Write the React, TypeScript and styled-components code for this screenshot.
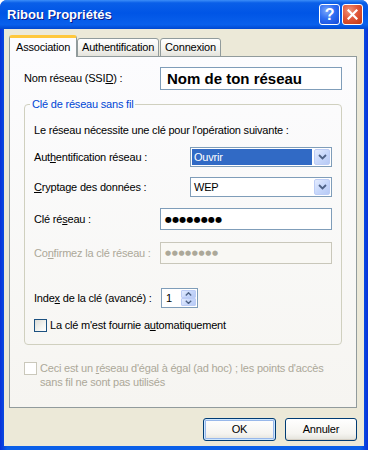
import React from 'react';
import styled, { createGlobalStyle } from 'styled-components';

const GlobalStyle = createGlobalStyle`
  html, body {
    margin: 0;
    padding: 0;
    background: #ffffff;
  }
  body {
    font-family: "Liberation Sans", Arial, sans-serif;
    font-size: 11px;
    line-height: 13px;
    letter-spacing: -0.2px;
  }
`;

const Window = styled.div`
  width: 368px;
  height: 450px;
  box-sizing: border-box;
  display: flex;
  flex-direction: column;
  background: linear-gradient(to right, #0831d9 0%, #0a5fe8 2%, #0a5fe8 98%, #0831d9 100%);
  border-radius: 7px 7px 0 0;
  overflow: hidden;
`;

const TitleBar = styled.div`
  height: 29px;
  flex: none;
  display: flex;
  align-items: center;
  padding: 0 5px 0 7px;
  background: linear-gradient(
    to bottom,
    #3c8ef8 0%,
    #0a5fe8 10%,
    #0055e6 45%,
    #0960ec 85%,
    #0048d0 100%
  );
`;

const Title = styled.div`
  flex: 1;
  color: #ffffff;
  font-weight: bold;
  font-size: 13px;
  letter-spacing: 0;
  text-shadow: 1px 1px 0 #0a1a8a;
`;

const TitleButton = styled.div<{ $kind: 'help' | 'close' }>`
  width: 21px;
  height: 21px;
  box-sizing: border-box;
  margin-left: 2px;
  border: 1px solid #ffffff;
  border-radius: 3px;
  display: flex;
  align-items: center;
  justify-content: center;
  color: #ffffff;
  font-weight: bold;
  font-size: 16px;
  background: ${(p) =>
    p.$kind === 'close'
      ? 'radial-gradient(circle at 35% 30%, #f0957b 0%, #e0573a 45%, #c2360f 100%)'
      : 'radial-gradient(circle at 35% 30%, #7ba7fb 0%, #2f6ef2 45%, #1347d8 100%)'};
`;

const Body = styled.div`
  flex: 1;
  margin: 0 4px 4px;
  background: #ece9d8;
  display: flex;
  flex-direction: column;
  padding: 7px 7px 0 5px;
`;

const TabRow = styled.div`
  display: flex;
  align-items: flex-end;
  height: 21px;
  position: relative;
  z-index: 1;
  margin-bottom: -1px;
`;

const Tab = styled.div<{ $active?: boolean }>`
  box-sizing: border-box;
  height: ${(p) => (p.$active ? '22px' : '19px')};
  padding: 0 ${(p) => (p.$active ? '6px' : '4px')};
  margin-right: ${(p) => (p.$active ? '0' : '1px')};
  display: flex;
  align-items: center;
  border: 1px solid #919b9c;
  border-bottom: ${(p) => (p.$active ? 'none' : '1px solid #919b9c')};
  border-top: ${(p) => (p.$active ? '3px solid #ffc83c' : '1px solid #919b9c')};
  border-radius: 3px 3px 0 0;
  background: ${(p) =>
    p.$active ? '#fcfcfe' : 'linear-gradient(to bottom, #ffffff 0%, #f3f3ef 60%, #e4e3dc 100%)'};
  color: #000000;
`;

const Panel = styled.div`
  flex: 1;
  box-sizing: border-box;
  border: 1px solid #919b9c;
  background: linear-gradient(to bottom, #fcfcfe 0%, #f6f5f1 100%);
  padding: 10px 14px 0 14px;
  display: flex;
  flex-direction: column;
`;

const Row = styled.div<{ $mt?: number; $start?: boolean }>`
  display: flex;
  align-items: center;
  justify-content: ${(p) => (p.$start ? 'flex-start' : 'space-between')};
  margin-top: ${(p) => p.$mt ?? 0}px;
`;

const Label = styled.span<{ $disabled?: boolean; $w?: number }>`
  color: ${(p) => (p.$disabled ? '#aca899' : '#000000')};
  ${(p) => (p.$w ? `width: ${p.$w}px; flex: none;` : '')}
`;

const Key = styled.span`
  text-decoration: underline;
`;

const TextBox = styled.div<{ $w: number; $h: number; $disabled?: boolean }>`
  width: ${(p) => p.$w}px;
  height: ${(p) => p.$h}px;
  box-sizing: border-box;
  border: 1px solid ${(p) => (p.$disabled ? '#c9c7ba' : '#7f9db9')};
  background: ${(p) => (p.$disabled ? '#f9f8f4' : '#ffffff')};
  display: flex;
  align-items: center;
  padding-left: 4px;
`;

const SsidText = styled.span`
  font-weight: bold;
  font-size: 15px;
  letter-spacing: 0;
  padding-left: 2px;
`;

const Dots = styled.span<{ $disabled?: boolean }>`
  font-family: "DejaVu Sans", sans-serif;
  font-size: ${(p) => (p.$disabled ? '7px' : '8px')};
  letter-spacing: ${(p) => (p.$disabled ? '0.6px' : '0.2px')};
  color: ${(p) => (p.$disabled ? '#aca899' : '#000000')};
`;

const Group = styled.fieldset`
  margin: 8px 0 0;
  padding: 0 9px 12px;
  border: 1px solid #d0d0bf;
  border-radius: 4px;
  min-width: 0;
`;

const Legend = styled.legend`
  color: #0046d5;
  padding: 0 2px;
  margin-left: -4px;
`;

const Select = styled.div`
  width: 142px;
  height: 20px;
  box-sizing: border-box;
  border: 1px solid #7f9db9;
  background: #ffffff;
  display: flex;
  padding: 1px;
`;

const SelectValue = styled.div<{ $selected?: boolean }>`
  flex: 1;
  margin-right: 2px;
  padding-left: 2px;
  display: flex;
  align-items: center;
  background: ${(p) => (p.$selected ? '#316ac5' : 'transparent')};
  color: ${(p) => (p.$selected ? '#ffffff' : '#000000')};
`;

const ArrowButton = styled.div`
  width: 16px;
  box-sizing: border-box;
  border: 1px solid #bdcdf6;
  border-radius: 2px;
  background: linear-gradient(135deg, #e4ecfe 0%, #c8d8fb 50%, #b7caf5 100%);
  display: flex;
  align-items: center;
  justify-content: center;
`;

const Spinner = styled.div`
  width: 37px;
  height: 20px;
  box-sizing: border-box;
  border: 1px solid #7f9db9;
  background: #ffffff;
  display: flex;
  padding: 1px;
`;

const SpinValue = styled.div`
  flex: 1;
  padding-left: 3px;
  display: flex;
  align-items: center;
`;

const SpinButtons = styled.div`
  width: 15px;
  display: flex;
  flex-direction: column;
`;

const SpinButton = styled(ArrowButton)`
  width: 15px;
  flex: 1;
  border-radius: 1px;
`;

const Check = styled.div<{ $disabled?: boolean }>`
  width: 13px;
  height: 13px;
  box-sizing: border-box;
  flex: none;
  border: 1px solid ${(p) => (p.$disabled ? '#cac8bb' : '#1c5180')};
  background: ${(p) =>
    p.$disabled ? '#ffffff' : 'linear-gradient(135deg, #dcdcd7 0%, #f4f4f0 60%, #ffffff 100%)'};
`;

const CheckRow = styled.div<{ $mt?: number }>`
  display: flex;
  align-items: flex-start;
  gap: 3px;
  margin-top: ${(p) => p.$mt ?? 0}px;
`;

const AdHocText = styled.span`
  color: #aca899;
  line-height: 14px;
  margin-top: -1px;
`;

const ButtonRow = styled.div`
  display: flex;
  justify-content: flex-end;
  gap: 9px;
  margin: 10px 0 5px;
`;

const Button = styled.div<{ $default?: boolean; $w: number }>`
  width: ${(p) => p.$w}px;
  height: 23px;
  box-sizing: border-box;
  border: 1px solid #003c74;
  border-radius: 3px;
  display: flex;
  align-items: center;
  justify-content: center;
  background: linear-gradient(to bottom, #ffffff 0%, #f5f4f0 70%, #e3e2da 100%);
  box-shadow: ${(p) =>
    p.$default ? 'inset 0 0 0 1px #cee7ff, inset 0 0 0 2px #98b8ea' : 'inset 0 -1px 0 #d6d0c5'};
`;

const Chevron = ({ up = false, size = 9 }: { up?: boolean; size?: number }) => (
  <svg width={size} height={size * 0.6} viewBox="0 0 9 5.4">
    <path
      d={up ? 'M1 4.4 L4.5 1 L8 4.4' : 'M1 1 L4.5 4.4 L8 1'}
      fill="none"
      stroke="#4d6185"
      strokeWidth="1.8"
    />
  </svg>
);

const CloseIcon = () => (
  <svg width="11" height="11" viewBox="0 0 11 11">
    <path d="M1.5 1.5 L9.5 9.5 M9.5 1.5 L1.5 9.5" stroke="#ffffff" strokeWidth="2.2" strokeLinecap="square" />
  </svg>
);

const Dropdown = ({ value, selected }: { value: string; selected?: boolean }) => (
  <Select>
    <SelectValue $selected={selected}>{value}</SelectValue>
    <ArrowButton>
      <Chevron />
    </ArrowButton>
  </Select>
);

export default function App() {
  return (
    <>
      <GlobalStyle />
      <Window>
        <TitleBar>
          <Title>Ribou Propriétés</Title>
          <TitleButton $kind="help">?</TitleButton>
          <TitleButton $kind="close">
            <CloseIcon />
          </TitleButton>
        </TitleBar>
        <Body>
          <TabRow>
            <Tab $active>Association</Tab>
            <Tab>Authentification</Tab>
            <Tab>Connexion</Tab>
          </TabRow>
          <Panel>
            <Row>
              <Label>
                Nom réseau (SSI<Key>D</Key>) :
              </Label>
              <TextBox $w={182} $h={23}>
                <SsidText>Nom de ton réseau</SsidText>
              </TextBox>
            </Row>

            <Group>
              <Legend>Clé de réseau sans fil</Legend>
              <Row $mt={13}>
                <Label>Le réseau nécessite une clé pour l'opération suivante :</Label>
              </Row>
              <Row $mt={10}>
                <Label>
                  Aut<Key>h</Key>entification réseau :
                </Label>
                <Dropdown value="Ouvrir" selected />
              </Row>
              <Row $mt={10}>
                <Label>
                  <Key>C</Key>ryptage des données :
                </Label>
                <Dropdown value="WEP" />
              </Row>
              <Row $mt={11}>
                <Label>
                  Clé ré<Key>s</Key>eau :
                </Label>
                <TextBox $w={172} $h={22}>
                  <Dots>●●●●●●●●</Dots>
                </TextBox>
              </Row>
              <Row $mt={12}>
                <Label $disabled>
                  Co<Key>n</Key>firmez la clé réseau :
                </Label>
                <TextBox $w={172} $h={22} $disabled>
                  <Dots $disabled>●●●●●●●●</Dots>
                </TextBox>
              </Row>
              <Row $mt={24} $start>
                <Label $w={127}>
                  Inde<Key>x</Key> de la clé (avancé) :
                </Label>
                <Spinner>
                  <SpinValue>1</SpinValue>
                  <SpinButtons>
                    <SpinButton>
                      <Chevron up size={7} />
                    </SpinButton>
                    <SpinButton>
                      <Chevron size={7} />
                    </SpinButton>
                  </SpinButtons>
                </Spinner>
              </Row>
              <CheckRow $mt={11}>
                <Check />
                <Label>
                  La clé m'est fournie a<Key>u</Key>tomatiquement
                </Label>
              </CheckRow>
            </Group>

            <CheckRow $mt={17}>
              <Check $disabled />
              <AdHocText>
                Ceci est un <Key>r</Key>éseau d'égal à égal (ad hoc) ; les points d'accès
                <br />
                sans fil ne sont pas utilisés
              </AdHocText>
            </CheckRow>
          </Panel>
          <ButtonRow>
            <Button $default $w={73}>
              OK
            </Button>
            <Button $w={72}>Annuler</Button>
          </ButtonRow>
        </Body>
      </Window>
    </>
  );
}
